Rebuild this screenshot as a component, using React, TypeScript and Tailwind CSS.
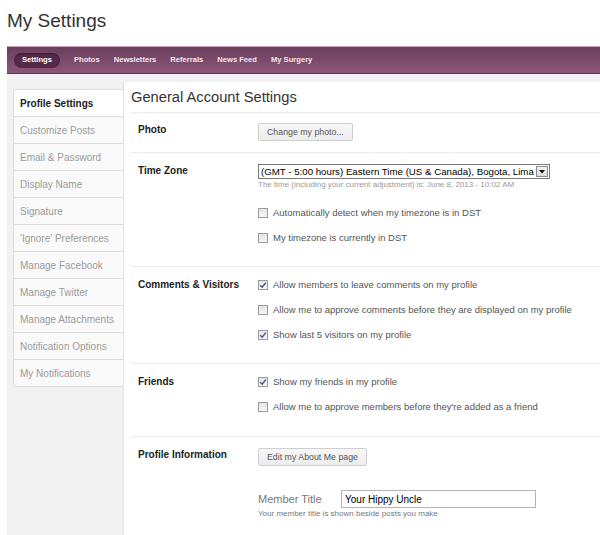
import React from "react";

const navItems = ["Photos", "Newsletters", "Referrals", "News Feed", "My Surgery"];

const sideItems = [
  "Profile Settings",
  "Customize Posts",
  "Email & Password",
  "Display Name",
  "Signature",
  "'Ignore' Preferences",
  "Manage Facebook",
  "Manage Twitter",
  "Manage Attachments",
  "Notification Options",
  "My Notifications",
];

function Check({ checked, label }: { checked?: boolean; label: string }) {
  return (
    <div className="flex items-center gap-[5px] leading-[14px]">
      <span className="flex h-[10px] w-[10px] items-center justify-center border border-[#9c9c9c] bg-gradient-to-b from-[#e4e4e4] to-[#f7f7f7]">
        {checked && (
          <svg width="8" height="8" viewBox="0 0 8 8">
            <path d="M1.2 4.2 L3.2 6.2 L6.8 1.6" fill="none" stroke="#3f5488" strokeWidth="1.4" />
          </svg>
        )}
      </span>
      <span className="text-[9.5px] text-[#555]">{label}</span>
    </div>
  );
}

function Btn({ children }: { children: React.ReactNode }) {
  return (
    <button className="block h-[18px] rounded-[2px] border border-[#cfcfcf] bg-gradient-to-b from-[#f8f8f8] to-[#ececec] px-[8px] text-[8.8px] leading-[16px] text-[#555]">
      {children}
    </button>
  );
}

function Row({ label, children, className }: { label: string; children: React.ReactNode; className: string }) {
  return (
    <div className={`flex border-b border-[#ebebeb] ${className}`}>
      <div className="w-[127px] shrink-0 pl-[7px] text-[10px] font-bold leading-[14px] text-[#222]">{label}</div>
      <div className="flex-1">{children}</div>
    </div>
  );
}

export default function App() {
  return (
    <div className="h-[535px] w-[600px] overflow-hidden bg-white font-['Liberation_Sans',Arial,sans-serif]">
      <h1 className="h-[46px] pl-[7px] pt-[9px] text-[19px] leading-[24px] text-[#333]">My Settings</h1>

      <div className="ml-[7px]">
        {/* nav bar */}
        <div className="flex h-[28px] items-center gap-[14px] border-t border-[#c9a2bc] border-b border-b-[#5d3453] bg-gradient-to-b from-[#6a3e5d] to-[#8c5679] pl-[7px] text-[7.6px] font-bold text-white">
          <span className="flex h-[15px] items-center rounded-full bg-[#56294a] px-[8px] shadow-[inset_0_1px_2px_rgba(0,0,0,0.35)]">
            Settings
          </span>
          {navItems.map((n) => (
            <span key={n} className="text-[#f3e6ef]">
              {n}
            </span>
          ))}
        </div>

        <div className="flex h-[470px] bg-[#f2f2f2]">
          {/* sidebar */}
          <div className="w-[116px] shrink-0 pl-[6px] pt-[15px]">
            <div className="border-l border-t border-[#dddddd] bg-[#fafafa]">
              {sideItems.map((s, i) => (
                <div
                  key={s}
                  className={`flex h-[27px] items-center border-b border-[#dddddd] pl-[6px] text-[10px] ${
                    i === 0 ? "bg-white font-bold text-[#222]" : "text-[#9a9a9a]"
                  }`}
                >
                  {s}
                </div>
              ))}
            </div>
          </div>

          {/* main */}
          <div className="mt-[8px] flex-1 border-l border-[#e3e3e3] bg-white">
            <div className="ml-[7px]">
              <div className="flex h-[31px] items-center border-b border-[#ebebeb] text-[14.7px] text-[#333]">
                General Account Settings
              </div>

              <Row label="Photo" className="pb-[11px] pt-[10px]">
                <Btn>Change my photo...</Btn>
              </Row>

              <Row label="Time Zone" className="pb-[21px] pt-[11px]">
                <div className="flex h-[15px] w-[292px] items-center justify-between border border-[#7a7a7a] bg-white pl-[2px] pr-[1px]">
                  <span className="whitespace-nowrap text-[9.7px] leading-[13px] text-black">
                    (GMT - 5:00 hours) Eastern Time (US &amp; Canada), Bogota, Lima
                  </span>
                  <span className="flex h-[11px] w-[12px] items-center justify-center border border-[#8a8a8a] bg-gradient-to-b from-[#f4f4f4] to-[#dcdcdc]">
                    <svg width="6" height="4" viewBox="0 0 6 4">
                      <path d="M0 0 H6 L3 3.5 Z" fill="#111" />
                    </svg>
                  </span>
                </div>
                <div className="mt-[1px] text-[8px] leading-[10px] text-[#999]">
                  The time (including your current adjustment) is: June 8, 2013 - 10:02 AM
                </div>
                <div className="mt-[16px] flex flex-col gap-[11px]">
                  <Check label="Automatically detect when my timezone is in DST" />
                  <Check label="My timezone is currently in DST" />
                </div>
              </Row>

              <Row label="Comments & Visitors" className="pb-[21px] pt-[11px]">
                <div className="flex flex-col gap-[11px]">
                  <Check checked label="Allow members to leave comments on my profile" />
                  <Check label="Allow me to approve comments before they are displayed on my profile" />
                  <Check checked label="Show last 5 visitors on my profile" />
                </div>
              </Row>

              <Row label="Friends" className="pb-[22px] pt-[11px]">
                <div className="flex flex-col gap-[11px]">
                  <Check checked label="Show my friends in my profile" />
                  <Check label="Allow me to approve members before they're added as a friend" />
                </div>
              </Row>

              <div className="flex pt-[11px]">
                <div className="w-[127px] shrink-0 pl-[7px] text-[10px] font-bold leading-[14px] text-[#222]">
                  Profile Information
                </div>
                <div className="flex-1">
                  <Btn>Edit my About Me page</Btn>
                  <div className="mt-[24px] flex h-[18px] items-center">
                    <span className="w-[83px] text-[11px] text-[#777]">Member Title</span>
                    <div className="flex h-[18px] w-[195px] items-center border border-[#b5b5b5] bg-white pl-[3px] text-[10px] text-black">
                      Your Hippy Uncle
                    </div>
                  </div>
                  <div className="mt-[1px] text-[8px] leading-[10px] text-[#777]">
                    Your member title is shown beside posts you make
                  </div>
                </div>
              </div>
            </div>
          </div>
        </div>
      </div>
    </div>
  );
}
